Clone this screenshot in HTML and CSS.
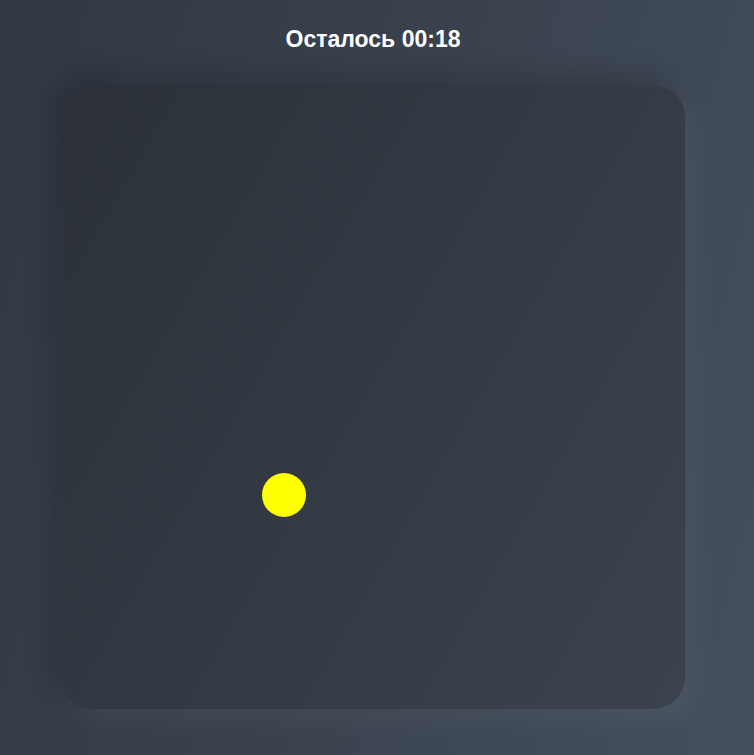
FILE: index.html
```html
<!DOCTYPE html>
<html lang="ru">
<head>
<meta charset="utf-8">
<title>Игра</title>
<link rel="stylesheet" href="styles.css">
</head>
<body>
<div class="page">
  <h1 class="timer">Осталось 00:18</h1>
  <div class="field">
    <div class="dot"></div>
  </div>
</div>
</body>
</html>
```
FILE: styles.css
```css
html, body {
  margin: 0;
  padding: 0;
  height: 100%;
}
body {
  background: linear-gradient(105deg, #313842 0%, #3a424e 50%, #44505e 100%);
  font-family: "Liberation Sans", Arial, sans-serif;
  overflow: hidden;
}
.page {
  display: flex;
  flex-direction: column;
  align-items: center;
  padding-right: 8px;
  padding-top: 25px;
}
.timer {
  margin: 0;
  font-size: 23px;
  font-weight: bold;
  color: #ffffff;
  line-height: 28px;
  height: 28px;
}
.field {
  position: relative;
  margin-top: 32px;
  width: 624px;
  height: 624px;
  border-radius: 32px;
  background: linear-gradient(120deg, #2c3139 0%, #333a43 50%, #3b434e 100%);
  box-shadow: -10px -10px 26px rgba(0, 0, 0, 0.16), 10px 10px 26px rgba(255, 255, 255, 0.06);
}
.dot {
  position: absolute;
  left: 201px;
  top: 388px;
  width: 44px;
  height: 44px;
  border-radius: 50%;
  background: #ffff00;
}
```
